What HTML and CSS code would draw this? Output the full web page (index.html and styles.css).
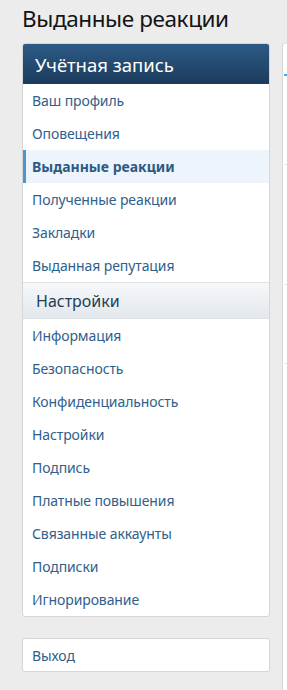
FILE: index.html
```html
<!DOCTYPE html>
<html lang="ru">
<head>
<meta charset="utf-8">
<link rel="stylesheet" href="styles.css">
</head>
<body>
<h1 class="page-title">Выданные реакции</h1>
<div class="layout">
  <aside class="sidebar">
    <nav class="block">
      <h2 class="block-header">Учётная запись</h2>
      <a class="item">Ваш профиль</a>
      <a class="item">Оповещения</a>
      <a class="item is-selected">Выданные реакции</a>
      <a class="item">Полученные реакции</a>
      <a class="item">Закладки</a>
      <a class="item">Выданная репутация</a>
      <h3 class="block-minor">Настройки</h3>
      <a class="item">Информация</a>
      <a class="item">Безопасность</a>
      <a class="item">Конфиденциальность</a>
      <a class="item">Настройки</a>
      <a class="item">Подпись</a>
      <a class="item">Платные повышения</a>
      <a class="item">Связанные аккаунты</a>
      <a class="item">Подписки</a>
      <a class="item">Игнорирование</a>
    </nav>
    <nav class="block block-logout">
      <a class="item">Выход</a>
    </nav>
  </aside>
  <main class="main">
    <div class="main-panel">
      <div class="tabs"></div>
      <div class="row row-1"></div>
      <div class="row row-2"></div>
      <div class="row row-3"></div>
    </div>
  </main>
</div>
</body>
</html>
```

FILE: styles.css
```css
html, body {
  margin: 0;
  padding: 0;
}
body {
  background: #ececec;
  font-family: "Noto Sans", "Open Sans", sans-serif;
  color: #141414;
  width: 287px;
  height: 690px;
  overflow: hidden;
}
.page-title {
  margin: 0;
  padding: 3px 0 0 22px;
  height: 40px;
  box-sizing: border-box;
  font-weight: 400;
  font-size: 22.5px;
  line-height: 32px;
  color: #141414;
  letter-spacing: -0.4px;
}
.layout {
  display: flex;
  gap: 12px;
  padding-left: 22px;
  padding-top: 3px;
}
.sidebar {
  width: 248px;
  flex: none;
  display: flex;
  flex-direction: column;
  gap: 21px;
}
.block {
  background: #fff;
  border: 1px solid #d6d6d6;
  border-radius: 3px;
  display: flex;
  flex-direction: column;
  overflow: hidden;
}
.block-header {
  margin: 0;
  height: 40px;
  box-sizing: border-box;
  padding: 0 12px;
  display: flex;
  align-items: center;
  background: linear-gradient(#2d5b87, #1b3b5b);
  color: #fff;
  font-weight: 400;
  font-size: 18.5px;
  letter-spacing: 0;
}
.block-minor {
  margin: 0;
  height: 37px;
  box-sizing: border-box;
  padding: 0 13px;
  display: flex;
  align-items: center;
  background: linear-gradient(#f6f8fa, #e3e8ed);
  border-top: 1px solid #dde2e7;
  border-bottom: 1px solid #dde2e7;
  color: #253d57;
  font-weight: 400;
  font-size: 16px;
}
.item {
  height: 33px;
  box-sizing: border-box;
  display: flex;
  align-items: center;
  padding: 0 9px;
  font-size: 14px;
  color: #30608b;
  letter-spacing: -0.1px;
  border-left: 3px solid transparent;
  padding-left: 6px;
}
.item.is-selected {
  background: #edf4fc;
  border-left-color: #4a98cf;
  font-weight: 700;
  color: #2c5a85;
  letter-spacing: 0;
}
.block-logout .item {
  height: 32px;
}
.main {
  flex: 1;
  min-width: 0;
}
.main-panel {
  background: #fff;
  border-left: 1px solid #d6d6d6;
  border-top: 1px solid #e4e4e4;
  border-radius: 3px 0 0 0;
  height: 660px;
  position: relative;
}
.tabs {
  height: 30px;
  border-bottom: 2px solid #47a7eb;
  margin-left: 1px;
}
.row {
  margin-left: 2px;
  border-bottom: 1px solid #dedede;
}
.row-1 { height: 88px; }
.row-2 { height: 119px; }
.row-3 { height: 78px; }
```
